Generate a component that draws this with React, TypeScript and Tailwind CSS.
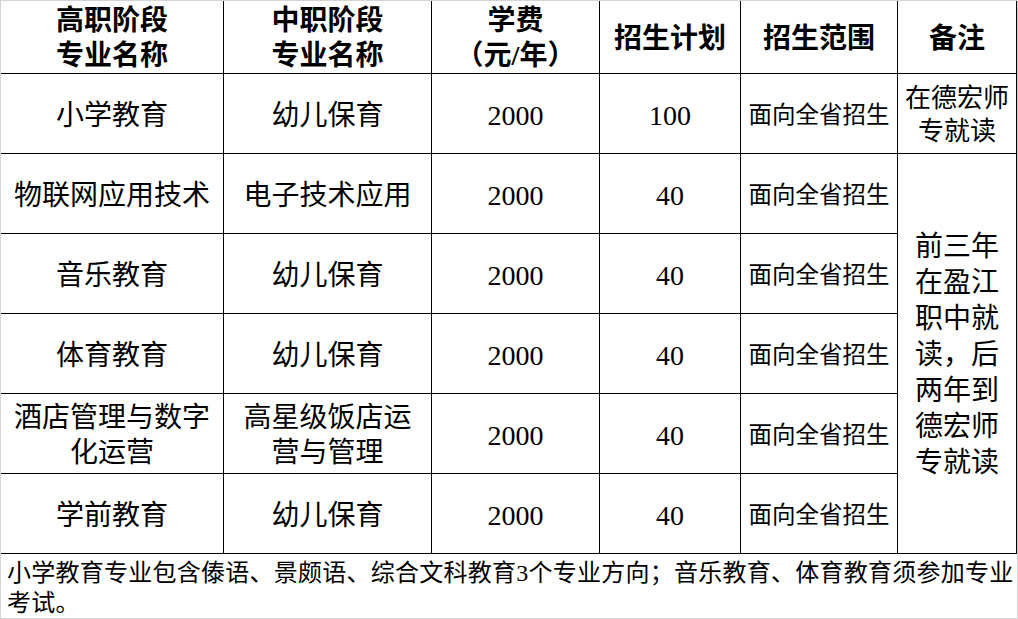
import React from 'react';

const rows = [
    { high: ['小学教育'], mid: ['幼儿保育'], fee: '2000', plan: '100' },
    { high: ['物联网应用技术'], mid: ['电子技术应用'], fee: '2000', plan: '40' },
    { high: ['音乐教育'], mid: ['幼儿保育'], fee: '2000', plan: '40' },
    { high: ['体育教育'], mid: ['幼儿保育'], fee: '2000', plan: '40' },
    { high: ['酒店管理与数字', '化运营'], mid: ['高星级饭店运', '营与管理'], fee: '2000', plan: '40' },
    { high: ['学前教育'], mid: ['幼儿保育'], fee: '2000', plan: '40' },
];

const cell = 'border-r border-b border-black text-center align-middle p-0';

function Lines({ lines }: { lines: string[] }) {
    return (
        <>
            {lines.map((l, i) => (
                <div key={i}>{l}</div>
            ))}
        </>
    );
}

export default function App() {
    return (
        <div
            className="w-[1018px] h-[619px] bg-white border border-[#d4d4d4] text-black"
            style={{ fontFamily: '"Liberation Serif", "Noto Sans CJK SC", serif' }}
        >
            <table className="table-fixed border-separate border-spacing-0 w-[1016px]">
                <colgroup>
                    <col className="w-[223px]" />
                    <col className="w-[208px]" />
                    <col className="w-[168px]" />
                    <col className="w-[141px]" />
                    <col className="w-[157px]" />
                    <col className="w-[119px]" />
                </colgroup>
                <tbody>
                    {/* header */}
                    <tr className="h-[72px] text-[28px] leading-[35px] font-semibold">
                        <td className={`${cell} pt-[2px]`}>
                            <Lines lines={['高职阶段', '专业名称']} />
                        </td>
                        <td className={`${cell} pt-[2px]`}>
                            <Lines lines={['中职阶段', '专业名称']} />
                        </td>
                        <td className={`${cell} pt-[2px]`}>
                            <Lines lines={['学费', '（元/年）']} />
                        </td>
                        <td className={`${cell} pt-[2px]`}>招生计划</td>
                        <td className={`${cell} pt-[2px]`}>招生范围</td>
                        <td className={`${cell} pt-[2px]`}>备注</td>
                    </tr>

                    {rows.map((r, i) => (
                        <tr key={i} className="h-[80px] text-[28px] leading-[35px]">
                            <td className={`${cell} pt-[3px]`}>
                                <Lines lines={r.high} />
                            </td>
                            <td className={`${cell} pt-[3px]`}>
                                <Lines lines={r.mid} />
                            </td>
                            <td className={`${cell} pt-[3px]`}>{r.fee}</td>
                            <td className={`${cell} pt-[3px]`}>{r.plan}</td>
                            <td className={`${cell} pt-[3px] text-[23.5px]`}>面向全省招生</td>
                            {i === 0 && (
                                <td className={`${cell} pt-[3px] text-[26px] leading-[33px]`}>
                                    <Lines lines={['在德宏师', '专就读']} />
                                </td>
                            )}
                            {i === 1 && (
                                <td rowSpan={5} className={`${cell} pt-[3px] leading-[36px]`}>
                                    <Lines
                                        lines={[
                                            '前三年',
                                            '在盈江',
                                            '职中就',
                                            '读，后',
                                            '两年到',
                                            '德宏师',
                                            '专就读',
                                        ]}
                                    />
                                </td>
                            )}
                        </tr>
                    ))}

                    {/* note */}
                    <tr className="h-[65px]">
                        <td
                            colSpan={6}
                            className="p-0 pl-[6px] pt-[2px] align-middle text-left text-[24px] leading-[30px] tracking-[0.25px] whitespace-nowrap"
                        >
                            小学教育专业包含傣语、景颇语、综合文科教育3个专业方向；音乐教育、体育教育须参加专业
                            <br />
                            考试。
                        </td>
                    </tr>
                </tbody>
            </table>
        </div>
    );
}
